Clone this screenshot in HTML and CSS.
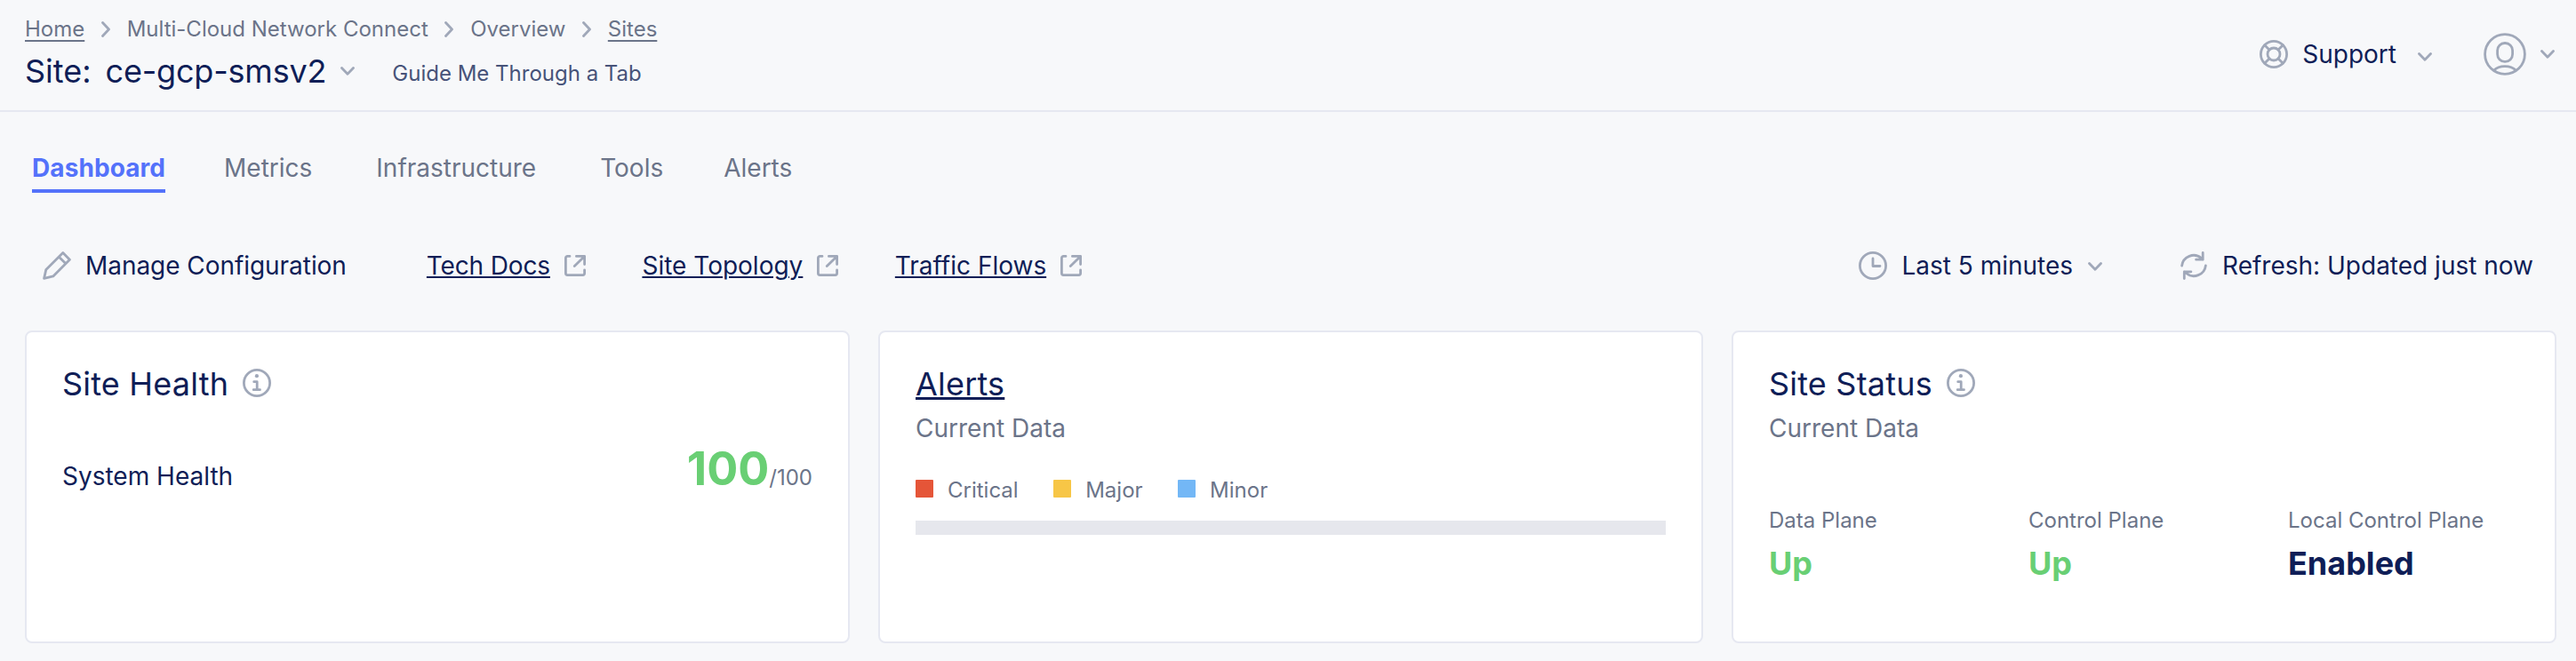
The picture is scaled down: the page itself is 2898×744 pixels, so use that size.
FILE: index.html
```html
<!DOCTYPE html>
<html lang="en">

<head>
    <meta charset="UTF-8">
    <meta name="viewport" content="width=device-width, initial-scale=1.0">
    <title>Site: ce-gcp-smsv2</title>
    <link rel="stylesheet" href="styles.css">
</head>

<body>
    <header class="header">
        <div class="header-left">
            <nav class="breadcrumb">
                <a href="#">Home</a>
                <svg class="crumb-arrow" viewBox="0 0 10 18"><path d="M1.5 1.5 8.5 9l-7 7.5" /></svg>
                <span>Multi-Cloud Network Connect</span>
                <svg class="crumb-arrow" viewBox="0 0 10 18"><path d="M1.5 1.5 8.5 9l-7 7.5" /></svg>
                <span>Overview</span>
                <svg class="crumb-arrow" viewBox="0 0 10 18"><path d="M1.5 1.5 8.5 9l-7 7.5" /></svg>
                <a href="#">Sites</a>
            </nav>
            <div class="title-row">
                <h1><span>Site:</span><span class="site-name">ce-gcp-smsv2</span></h1>
                <svg class="chevron" viewBox="0 0 16 10"><path d="M1.5 1.5 8 8.2l6.5-6.7" /></svg>
                <span class="guide">Guide Me Through a Tab</span>
            </div>
        </div>
        <div class="header-right">
            <svg class="icon" viewBox="0 0 32 32">
                <circle cx="16" cy="16" r="14.6" />
                <circle cx="16" cy="16" r="7" />
                <path d="M5.7 5.7l5.3 5.3M26.3 5.7 21 11M5.7 26.3 11 21M26.3 26.3 21 21" />
            </svg>
            <span class="support">Support</span>
            <svg class="chevron support-chevron" viewBox="0 0 16 10"><path d="M1.5 1.5 8 8.2l6.5-6.7" /></svg>
            <svg class="user-icon" viewBox="0 0 48 48">
                <circle cx="24" cy="24" r="22.4" />
                <rect x="15.6" y="11.5" width="17" height="20.8" rx="8.2" />
                <path d="M11.8 42c3-3 7-4.3 12.2-4.3s9.2 1.3 12.2 4.3" />
            </svg>
            <svg class="chevron user-chevron" viewBox="0 0 16 10"><path d="M1.5 1.5 8 8.2l6.5-6.7" /></svg>
        </div>
    </header>

    <nav class="tabs">
        <a class="tab active">Dashboard</a>
        <a class="tab">Metrics</a>
        <a class="tab">Infrastructure</a>
        <a class="tab tools">Tools</a>
        <a class="tab">Alerts</a>
    </nav>

    <div class="toolbar">
        <div class="action manage">
            <svg class="icon" viewBox="0 0 32 32">
                <path d="M22.8 1.6 30.4 9.2 11.8 27.9 1.6 30.4 3.8 20.4zM18.4 6.2l7.4 7.4" />
            </svg>
            <span>Manage Configuration</span>
        </div>
        <div class="action link">
            <a href="#">Tech Docs</a>
            <svg class="ext-icon" viewBox="0 0 24 24"><path d="M6 1.4H3.4a2 2 0 0 0-2 2v17.2a2 2 0 0 0 2 2h17.2a2 2 0 0 0 2-2v-3.8M13.4 1.4h9.2v9.2M22.6 1.4 11.3 12.5" /></svg>
        </div>
        <div class="action link">
            <a href="#">Site Topology</a>
            <svg class="ext-icon" viewBox="0 0 24 24"><path d="M6 1.4H3.4a2 2 0 0 0-2 2v17.2a2 2 0 0 0 2 2h17.2a2 2 0 0 0 2-2v-3.8M13.4 1.4h9.2v9.2M22.6 1.4 11.3 12.5" /></svg>
        </div>
        <div class="action link">
            <a href="#">Traffic Flows</a>
            <svg class="ext-icon" viewBox="0 0 24 24"><path d="M6 1.4H3.4a2 2 0 0 0-2 2v17.2a2 2 0 0 0 2 2h17.2a2 2 0 0 0 2-2v-3.8M13.4 1.4h9.2v9.2M22.6 1.4 11.3 12.5" /></svg>
        </div>
        <div class="action time">
            <svg class="icon" viewBox="0 0 32 32">
                <circle cx="16" cy="16" r="14.6" />
                <path d="M16 8v8.5h8" />
            </svg>
            <span>Last 5 minutes</span>
            <svg class="chevron" viewBox="0 0 16 10"><path d="M1.5 1.5 8 8.2l6.5-6.7" /></svg>
        </div>
        <div class="action refresh">
            <svg class="icon" viewBox="0 0 32 32">
                <path d="M2.6 16.2A13.4 13.4 0 0 1 24.5 7.500L26.200 9.200M26.200 1.500v7.700h-7.600M29.400 15.800A13.400 13.400 0 0 1 7.500 24.500L5.300 22.800M5.300 30.500v-7.700h7.600" />
            </svg>
            <span>Refresh: Updated just now</span>
        </div>
    </div>

    <main class="cards">
        <section class="card">
            <h2>Site Health
                <svg class="icon" viewBox="0 0 32 32">
                    <circle cx="16" cy="16" r="14.6" />
                    <path d="M12.7 14.7h3.5v9M12.2 23.7h7.3" />
                    <circle class="dot" cx="15.9" cy="8.2" r="2.1" />
                </svg>
            </h2>
            <div class="health-row">
                <span>System Health</span>
                <span class="score"><b>100</b>/100</span>
            </div>
        </section>

        <section class="card">
            <h2><a href="#">Alerts</a></h2>
            <p class="subtitle">Current Data</p>
            <ul class="legend">
                <li class="critical">Critical</li>
                <li class="major">Major</li>
                <li class="minor">Minor</li>
            </ul>
            <div class="alert-bar"></div>
        </section>

        <section class="card">
            <h2>Site Status
                <svg class="icon" viewBox="0 0 32 32">
                    <circle cx="16" cy="16" r="14.6" />
                    <path d="M12.7 14.7h3.5v9M12.2 23.7h7.3" />
                    <circle class="dot" cx="15.9" cy="8.2" r="2.1" />
                </svg>
            </h2>
            <p class="subtitle">Current Data</p>
            <dl class="planes">
                <div>
                    <dt>Data Plane</dt>
                    <dd class="up">Up</dd>
                </div>
                <div>
                    <dt>Control Plane</dt>
                    <dd class="up">Up</dd>
                </div>
                <div>
                    <dt>Local Control Plane</dt>
                    <dd>Enabled</dd>
                </div>
            </dl>
        </section>
    </main>
</body>

</html>
```
FILE: styles.css
```css
* {
    margin: 0;
    padding: 0;
    box-sizing: border-box;
}

body {
    font-family: Inter, "Liberation Sans", sans-serif;
    font-size: 28px;
    line-height: 34px;
    color: #0f1e57;
    background: #f7f8fa;
    white-space: nowrap;
}

a {
    color: inherit;
}

svg {
    flex: none;
    fill: none;
    stroke: #a0a8b9;
    stroke-width: 2.8;
    stroke-linecap: round;
    stroke-linejoin: round;
}

.icon {
    width: 32px;
    height: 32px;
}

.dot {
    fill: #a0a8b9;
    stroke: none;
}

.chevron {
    width: 16px;
    height: 10px;
}

.header {
    display: flex;
    justify-content: space-between;
    height: 126px;
    padding: 0 24px 0 28px;
    border-bottom: 2px solid #e6e8f1;
}

.breadcrumb {
    display: flex;
    align-items: center;
    gap: 18.7px;
    margin-top: 18px;
    font-size: 24px;
    line-height: 30px;
    color: #6b7489;
}

.crumb-arrow {
    width: 10px;
    height: 18px;
}

.breadcrumb a {
    text-decoration-thickness: 2px;
    text-underline-offset: 4px;
}

.title-row {
    display: flex;
    align-items: center;
    height: 44px;
    margin-top: 10px;
}

h1 {
    display: flex;
    gap: 16px;
    margin-right: 16px;
    font-size: 36px;
    font-weight: 400;
    line-height: 44px;
}

.site-name {
    letter-spacing: -0.2px;
}

.guide {
    margin: 6px 0 0 42px;
    font-size: 24px;
    line-height: 30px;
    color: #475379;
}

.header-right {
    display: flex;
    align-items: center;
    height: 122px;
}

.support {
    margin-left: 16px;
}

.support-chevron {
    margin: 6px 58px 0 24px;
}

.user-icon {
    width: 48px;
    height: 48px;
}

.user-chevron {
    margin-left: 16px;
}

.tabs {
    display: flex;
    gap: 72px;
    height: 91px;
    margin-left: 36px;
    padding-top: 46px;
    color: #6b7489;
}

.tab.active {
    margin-right: -6px;
    font-weight: 700;
    letter-spacing: 0.08px;
    color: #5472fa;
    border-bottom: 4px solid #5472fa;
}

.tab.tools {
    margin-right: -4px;
}

.toolbar {
    display: flex;
    align-items: center;
    height: 34px;
    margin-top: 65px;
    padding: 0 48px;
}

.action {
    display: flex;
    align-items: center;
    gap: 16px;
}

.manage {
    margin-right: 90px;
    letter-spacing: -0.05px;
}

.link {
    margin-right: 63.5px;
}

.link a {
    text-decoration-thickness: 2px;
    text-underline-offset: 2px;
}

.link:nth-child(2) a {
    letter-spacing: -0.15px;
}

.ext-icon {
    width: 24px;
    height: 24px;
}

.time {
    margin-left: auto;
}

.time .chevron {
    margin: 2px 0 0 1px;
}

.refresh {
    margin-left: 87px;
}

.cards {
    display: grid;
    grid-template-columns: repeat(3, 928px);
    gap: 32px;
    margin: 56px 0 0 28px;
}

.card {
    height: 352px;
    padding: 34px 40px;
    background: #fff;
    border: 2px solid #e6e8f1;
    border-radius: 8px;
}

h2 {
    display: flex;
    align-items: center;
    gap: 16px;
    font-size: 36px;
    font-weight: 400;
    line-height: 48px;
    letter-spacing: 0.2px;
}

h2 .icon {
    margin-top: -2px;
}

h2 a {
    text-decoration-thickness: 3px;
    text-underline-offset: 2px;
}

.health-row {
    display: flex;
    align-items: baseline;
    justify-content: space-between;
    margin-top: 42px;
}

.score {
    font-size: 24px;
    line-height: 60px;
    color: #6b7489;
}

.score b {
    font-size: 52px;
    color: #69cf74;
}

.subtitle {
    margin-top: 9px;
    color: #6b7489;
}

.legend {
    display: flex;
    gap: 39.5px;
    margin-top: 38px;
    list-style: none;
    font-size: 24px;
    line-height: 30px;
    color: #6b7489;
}

.legend li {
    display: flex;
    align-items: center;
}

.legend li::before {
    content: "";
    width: 20px;
    height: 20px;
    margin: 0 16px 4px 0;
    border-radius: 1px;
}

.legend .critical::before {
    background: #e55538;
}

.legend .major::before {
    background: #f7c646;
}

.legend .minor::before {
    background: #73b7f6;
}

.alert-bar {
    height: 16px;
    margin-top: 19px;
    background: #e6e7ed;
}

.planes {
    display: grid;
    grid-template-columns: repeat(3, 292px);
    margin-top: 72px;
}

.planes dt {
    font-size: 24px;
    line-height: 30px;
    color: #6b7489;
}

.planes dd {
    margin-top: 11px;
    font-size: 36px;
    font-weight: 700;
    line-height: 44px;
}

.planes .up {
    color: #69cf74;
}
```
